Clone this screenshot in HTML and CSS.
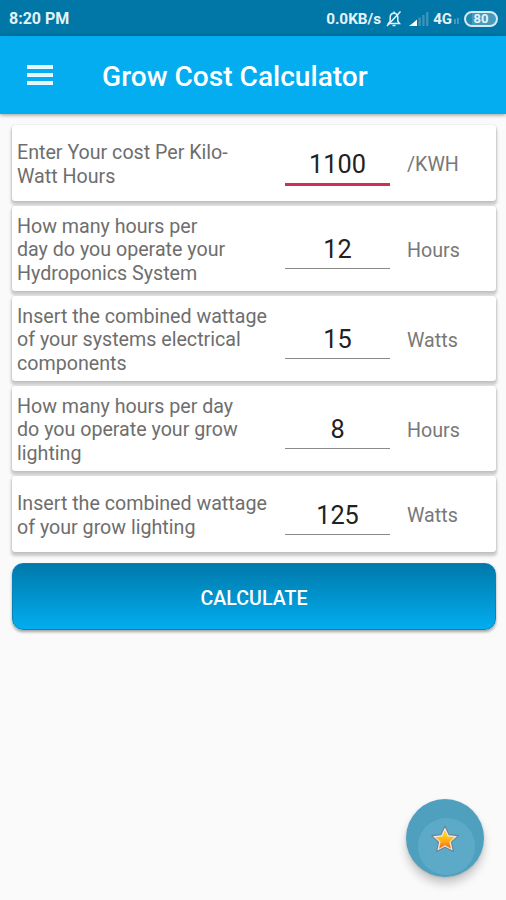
FILE: index.html
```html
<!DOCTYPE html>
<html lang="en">
<head>
    <meta charset="UTF-8">
    <meta name="viewport" content="width=device-width, initial-scale=1.0">
    <title>Grow Cost Calculator</title>
    <link rel="stylesheet" href="styles.css">
</head>
<body>
    <div class="status-bar">
        <span class="time">8:20 PM</span>
        <div class="status-icons">
            <span class="speed">0.0KB/s</span>
            <svg class="bell" width="16" height="18" viewBox="0 0 16 18" fill="none" stroke="#e4f3fa" stroke-width="1.5">
                <path d="M2.5 13.5h11l-1.7-2.3V7.5c0-2.600-1.500-4.300-3.800-4.300S4.200 4.900 4.200 7.500v3.700z"/>
                <path d="M6.500 15.500h3M8 1.500v1.500M1 16L14.500 1.500"/>
            </svg>
            <svg class="signal" width="20" height="14" viewBox="0 0 20 14">
                <path d="M0 14l4-3v3zM4 11l4-3.500V14H4z" fill="#fff"/>
                <path d="M9.500 5.500h2.300V14H9.500zM13.300 3h2.300v11h-2.300zM17.100 0h2.300v14h-2.300z" fill="#3b95bb"/>
            </svg>
            <span class="network">4G</span>
            <svg class="signal-small" width="5" height="6" viewBox="0 0 5 6">
                <path d="M0 1h1.800v5H0zM3 0h1.800v6H3z" fill="#4b9dc0"/>
            </svg>
            <div class="battery"><span>80</span></div>
        </div>
    </div>

    <div class="toolbar">
        <div class="menu-icon">
            <i></i>
            <i></i>
            <i></i>
        </div>
        <h1>Grow Cost Calculator</h1>
    </div>

    <div class="container">
        <div class="card short">
            <label for="cost">Enter Your cost Per Kilo-<br>Watt Hours</label>
            <input type="text" id="cost" class="active" value="1100">
            <span class="unit">/KWH</span>
        </div>
        <div class="card">
            <label for="hours">How many hours per<br>day do you operate your<br>Hydroponics System</label>
            <input type="text" id="hours" value="12">
            <span class="unit">Hours</span>
        </div>
        <div class="card">
            <label for="watts">Insert the combined wattage<br>of your systems electrical<br>components</label>
            <input type="text" id="watts" value="15">
            <span class="unit">Watts</span>
        </div>
        <div class="card">
            <label for="light-hours">How many hours per day<br>do you operate your grow<br>lighting</label>
            <input type="text" id="light-hours" value="8">
            <span class="unit">Hours</span>
        </div>
        <div class="card short">
            <label for="light-watts">Insert the combined wattage<br>of your grow lighting</label>
            <input type="text" id="light-watts" value="125">
            <span class="unit">Watts</span>
        </div>
        <button class="calculate">CALCULATE</button>
    </div>

    <div class="fab">
        <div class="fab-inner"></div>
        <svg class="star" width="30" height="30" viewBox="0 0 28 28">
            <defs>
                <linearGradient id="gold" x1="0" y1="0" x2="0" y2="1">
                    <stop offset="0.2" stop-color="#ffd21c"/>
                    <stop offset="0.6" stop-color="#ffab12"/>
                    <stop offset="1" stop-color="#f4631c"/>
                </linearGradient>
            </defs>
            <path d="M14 1l3.700 8 8.800.9-6.500 6 1.900 8.900L14 20.700l-7.900 4.100L8 15.900l-6.500-6 8.800-.9z" fill="#ece7df" stroke="#6b8490" stroke-width="1" stroke-linejoin="round"/>
            <path d="M14 5l2.500 5.700 6.300.8-4.700 4.200 1.300 6.300L14 19l-5.400 3 1.300-6.300-4.700-4.200 6.300-.8z" fill="url(#gold)"/>
        </svg>
    </div>
</body>
</html>
```
FILE: styles.css
```css
* {
    box-sizing: border-box;
}

body {
    margin: 0;
    padding: 0;
    height: 900px;
    overflow: hidden;
    font-family: Roboto, sans-serif;
    background-color: #fafafa;
}

.status-bar {
    display: flex;
    align-items: center;
    justify-content: space-between;
    height: 36px;
    padding: 1px 8px 0 9px;
    background-color: #0077a6;
    color: #e4f3fa;
    font-size: 16px;
    font-weight: 700;
}

.status-icons {
    display: flex;
    align-items: center;
}

.speed {
    font-size: 15.3px;
}

.bell {
    margin-left: 5px;
}

.signal {
    margin-left: 7px;
}

.network {
    margin-left: 4px;
    font-size: 15px;
}

.signal-small {
    margin: 4px 5px 0 2px;
}

.battery {
    width: 34px;
    height: 16px;
    border: 2px solid #d5ebf4;
    border-radius: 8px;
    background: linear-gradient(90deg, #2388b3 0 20%, #469abd 20%);
    font-size: 13px;
    line-height: 12px;
    text-align: center;
}

.toolbar {
    display: flex;
    align-items: center;
    height: 78px;
    padding-left: 27px;
    background-color: #03adef;
    box-shadow: 0 1px 4px rgba(0, 0, 0, 0.4);
}

.menu-icon {
    display: flex;
    flex-direction: column;
    gap: 4px;
    width: 26px;
}

.menu-icon i {
    height: 4px;
    background-color: #e6f7fe;
}

h1 {
    margin: 3px 0 0 49px;
    color: #fff;
    font-size: 28.1px;
    font-weight: 500;
    white-space: nowrap;
}

.container {
    display: flex;
    flex-direction: column;
    gap: 5px;
    padding: 11px 10px 0 12px;
}

.card {
    display: flex;
    align-items: center;
    height: 85px;
    padding: 3px 0 0 5px;
    border-radius: 3px;
    background-color: #fff;
    box-shadow: 0 3px 3px 1px rgba(0, 0, 0, 0.2), 0 0 2px rgba(0, 0, 0, 0.14);
}

.card.short {
    height: 76px;
}

label {
    width: 268px;
    color: #6e6e6e;
    font-size: 19.65px;
    line-height: 23.2px;
    white-space: nowrap;
}

input[type="text"] {
    width: 105px;
    height: 38px;
    padding: 0;
    border: none;
    border-bottom: 1.5px solid #8a8a8a;
    background: none;
    color: #222;
    font-family: inherit;
    font-size: 25.3px;
    text-align: center;
    outline: none;
}

input[type="text"].active {
    height: 42px;
    padding-top: 2px;
    border-bottom: 3px solid #d0304f;
}

.unit {
    margin-left: 17px;
    color: #787878;
    font-size: 19.65px;
}

.calculate {
    height: 67px;
    margin-top: 6px;
    padding: 3px 0 0;
    border: 1px solid #0784b5;
    border-radius: 11px;
    background: linear-gradient(#0079aa, #02adef);
    box-shadow: 0 2px 3px rgba(0, 0, 0, 0.35);
    color: #fff;
    font-family: inherit;
    font-size: 19.6px;
    font-weight: 500;
}

.fab {
    position: absolute;
    right: 22px;
    bottom: 23px;
    width: 78px;
    height: 78px;
    border-radius: 50%;
    background-color: #4fa0bf;
    box-shadow: 0 7px 10px rgba(0, 0, 0, 0.2), 0 1px 3px rgba(0, 0, 0, 0.12);
}

.fab-inner {
    position: absolute;
    left: 12px;
    top: 19px;
    width: 57px;
    height: 57px;
    border-radius: 50%;
    background-color: #5caac7;
}

.star {
    position: absolute;
    left: 24px;
    top: 26px;
}
```
